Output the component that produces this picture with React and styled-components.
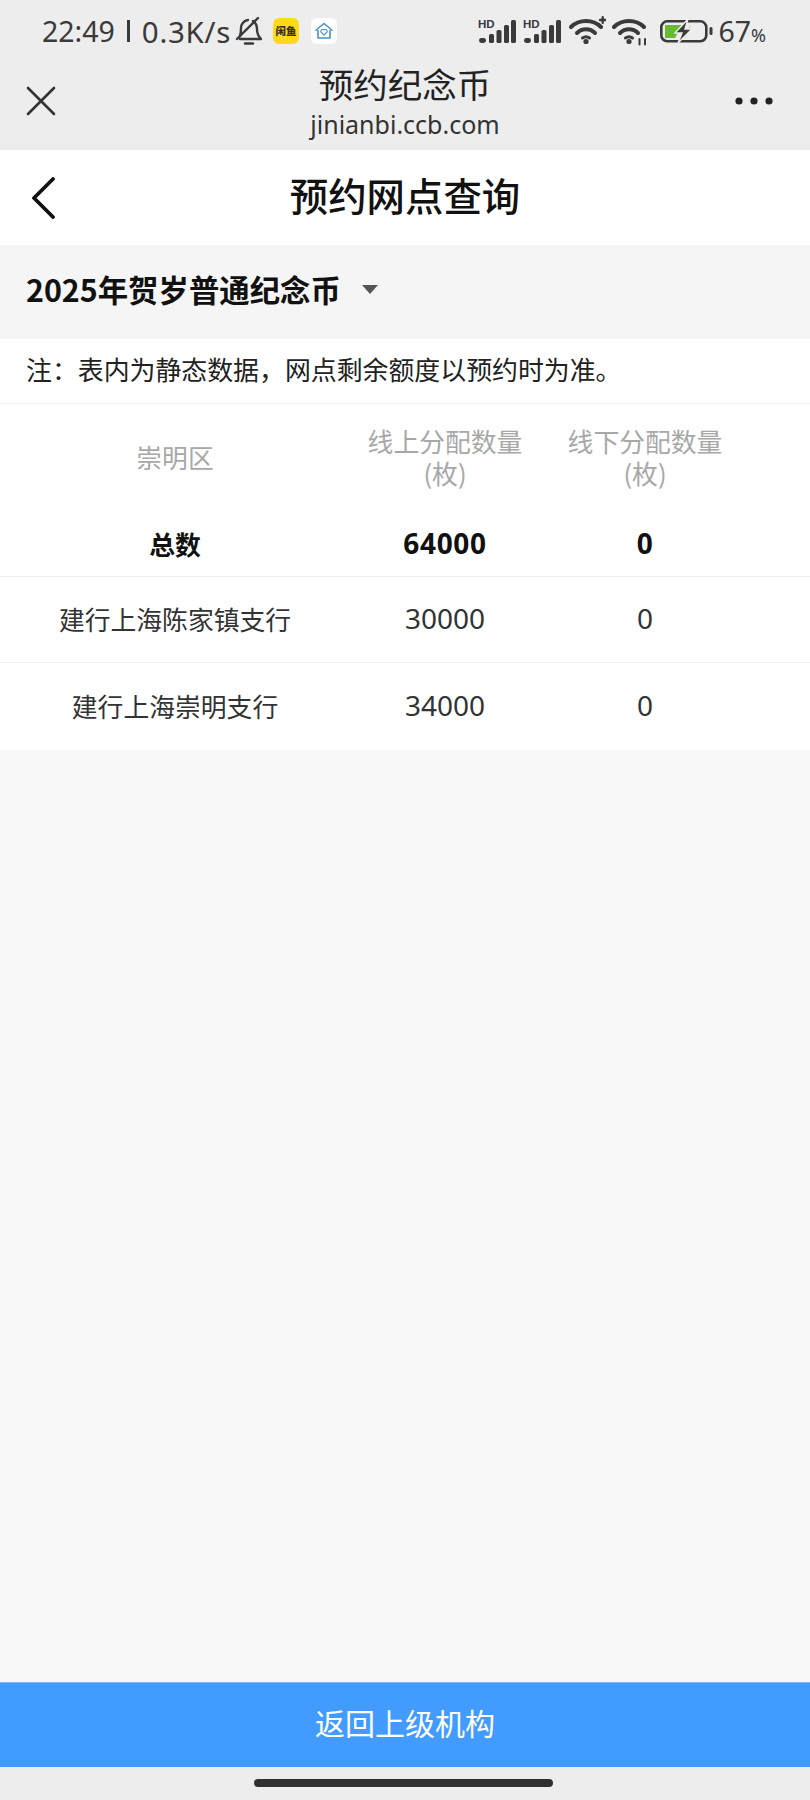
import styled, { createGlobalStyle } from "styled-components";

const GlobalStyle = createGlobalStyle`
  html, body {
    margin: 0;
    padding: 0;
    background: #f8f8f8;
    font-family: "Noto Sans CJK SC", "Noto Sans", sans-serif;
  }
  * { box-sizing: border-box; }
`;

const Page = styled.div`
  width: 810px;
  height: 1800px;
  display: flex;
  flex-direction: column;
  background: #f8f8f8;
  overflow: hidden;
`;

const TopArea = styled.div`
  height: 150px;
  background: #ededed;
  display: flex;
  flex-direction: column;
`;

const StatusBar = styled.div`
  height: 62px;
  padding: 0 44px 0 42px;
  display: flex;
  align-items: center;
  justify-content: space-between;
  color: #3a3a3a;
`;

const StatusGroup = styled.div`
  display: flex;
  align-items: center;
`;

const StatusText = styled.span`
  font-family: "Noto Sans", sans-serif;
  font-size: ${(p) => p.$size || 28.5}px;
  letter-spacing: ${(p) => p.$spacing || 0}px;
  white-space: nowrap;
`;

const Divider = styled.div`
  width: 3px;
  height: 22px;
  margin: 0 12px;
  background: #3a3a3a;
`;

const Percent = styled.span`
  font-size: 18px;
`;

const IconSlot = styled.div`
  display: flex;
  margin-left: ${(p) => p.$ml || 0}px;
`;

const AppBadge = styled.div`
  width: 26px;
  height: 26px;
  margin-left: ${(p) => p.$ml}px;
  border-radius: 6px;
  background: ${(p) => p.$bg};
  display: flex;
  align-items: center;
  justify-content: center;
`;

const BadgeText = styled.span`
  font-size: 10.5px;
  line-height: 1;
  font-weight: 900;
  color: #3a2f10;
  white-space: nowrap;
`;

const BrowserBar = styled.div`
  flex: 1;
  display: grid;
  grid-template-columns: 1fr auto 1fr;
  align-items: center;
  padding: 0 26px 10px;
`;

const BrowserTitle = styled.div`
  display: flex;
  flex-direction: column;
  align-items: center;
  gap: 4px;
`;

const SiteName = styled.div`
  font-size: 34.5px;
  line-height: 42px;
  color: #222;
`;

const SiteUrl = styled.div`
  font-family: "Noto Sans", sans-serif;
  font-size: 25px;
  line-height: 32px;
  color: #333;
`;

const MoreSlot = styled.div`
  display: flex;
  justify-content: flex-end;
  padding-right: 11px;
`;

const NavBar = styled.div`
  height: 95px;
  padding-left: 31px;
  background: #fff;
  display: grid;
  grid-template-columns: 1fr auto 1fr;
  align-items: center;
`;

const BackButton = styled.div`
  display: flex;
`;

const NavTitle = styled.div`
  padding-bottom: 7px;
  margin-left: -31px;
  font-size: 38.4px;
  font-weight: 500;
  color: #111;
`;

const Selector = styled.div`
  height: 94px;
  padding: 0 26px 6px;
  display: flex;
  align-items: center;
  gap: 21px;
  background: #f5f5f5;
`;

const SelectorLabel = styled.div`
  font-size: 30.4px;
  font-weight: 700;
  color: #111;
`;

const Caret = styled.div`
  width: 0;
  height: 0;
  border-left: 8px solid transparent;
  border-right: 8px solid transparent;
  border-top: 9px solid #555;
`;

const Note = styled.div`
  height: 65px;
  padding: 0 26px 6px;
  display: flex;
  align-items: center;
  background: #fff;
  border-bottom: 1px solid #f0f0f0;
  font-size: 25.9px;
  color: #222;
  white-space: nowrap;
`;

const Table = styled.div`
  background: #fff;
`;

const Row = styled.div`
  display: grid;
  grid-template-columns: 350px 190px 210px;
  align-items: center;
  height: ${(p) => p.$h}px;
  border-bottom: ${(p) => (p.$line ? "1px solid #f0f0f0" : "none")};
`;

const Cell = styled.div`
  padding-top: ${(p) => (p.$muted ? 1 : p.$bold ? 2 : 0)}px;
  padding-bottom: ${(p) => (p.$muted || p.$bold ? 0 : 2)}px;
  text-align: center;
  font-size: 25.8px;
  line-height: ${(p) => (p.$muted ? 32 : 37)}px;
  color: ${(p) => (p.$muted ? "#a8a8a8" : p.$bold ? "#111" : "#333")};
  font-weight: ${(p) => (p.$bold ? 700 : 400)};
  white-space: nowrap;
`;

const NumberCell = styled(Cell)`
  font-family: "Noto Sans", sans-serif;
  font-size: 28px;
  letter-spacing: ${(p) => (p.$bold ? 0.7 : 0)}px;
`;

const Spacer = styled.div`
  flex: 1;
`;

const ReturnButton = styled.div`
  height: 85px;
  padding-bottom: 6px;
  background: #429bff;
  border-top: 1px solid #7ab8f5;
  color: #fff;
  font-size: 30px;
  display: flex;
  align-items: center;
  justify-content: center;
`;

const BottomBar = styled.div`
  height: 33px;
  padding: 12px 3px 0 0;
  background: #ededed;
  display: flex;
  justify-content: center;
`;

const HomeIndicator = styled.div`
  width: 299px;
  height: 8px;
  border-radius: 4px;
  background: #303030;
`;

const Signal = () => (
  <svg width="38" height="30" viewBox="0 0 38 30" fill="#3a3a3a">
    <text x="0" y="12" fontSize="11.5" fontWeight="700" fontFamily="Liberation Sans, sans-serif">HD</text>
    <rect x="1" y="22" width="7" height="5" rx="2.4" />
    <rect x="11" y="18" width="5" height="9" rx="1.6" />
    <rect x="18.5" y="14" width="5" height="13" rx="1.6" />
    <rect x="26" y="9" width="5" height="18" rx="1.6" />
    <rect x="33" y="4" width="5" height="23" rx="1.6" />
  </svg>
);

const Wifi = ({ plus }) => (
  <svg width="37" height="30" viewBox="0 0 37 30" fill="none" stroke="#3a3a3a" strokeLinecap="round">
    <path d="M2 11 C10 3 24 3 32 11" strokeWidth="4" />
    <path d="M8 17 C13 12 21 12 26 17" strokeWidth="4" />
    <path d="M13.5 22 C15.5 20.5 18.5 20.5 20.5 22" strokeWidth="3" />
    <circle cx="17" cy="25.5" r="2.6" fill="#3a3a3a" stroke="none" />
    {plus ? (
      <path d="M31 4 H36.5 M33.7 1.2 V6.8" strokeWidth="2.4" />
    ) : (
      <path d="M27.5 23 V28.5 M33 23 V28.5" strokeWidth="2" />
    )}
  </svg>
);

const Battery = () => (
  <svg width="53" height="30" viewBox="0 0 53 30">
    <rect x="1.3" y="5.3" width="45" height="20" rx="6" fill="none" stroke="#3a3a3a" strokeWidth="2.6" />
    <path d="M5 9 H22 L15 22 H5 Z" fill="#66bb33" />
    <path d="M22 22 L30 9 H32 L26 22 Z" fill="#cfe8bd" />
    <path d="M28 3 L15 17 H22 L18 27 L32 13 H25 Z" fill="#3a3a3a" stroke="#ededed" strokeWidth="1.4" />
    <rect x="49.5" y="11" width="3" height="8" rx="1.5" fill="#3a3a3a" />
  </svg>
);

const MutedBell = () => (
  <svg width="28" height="30" viewBox="0 0 28 30" fill="none" stroke="#3a3a3a" strokeWidth="2.4" strokeLinecap="round" strokeLinejoin="round">
    <path d="M5 20 C6 17 6 15 6 12 C6 8 9 4.5 13 4 M18 5 C21 7 22 9 22 13 C22 18 23 20 26 23 H5" />
    <path d="M10 27.5 H18" />
    <path d="M2 23 L23 2" />
  </svg>
);

const HomeGlyph = () => (
  <svg width="20" height="20" viewBox="0 0 20 20" fill="none" stroke="#4a90c8" strokeWidth="1.6" strokeLinejoin="round">
    <path d="M1.5 9.5 L10 2.5 L18.5 9.5" />
    <path d="M4 9 V17 H16 V9" />
    <path d="M10 14 L6.8 10.8 A2 2 0 0 1 10 8.8 A2 2 0 0 1 13.2 10.8 Z" stroke="#5b93b8" strokeWidth="1.2" />
  </svg>
);

const CloseIcon = () => (
  <svg width="30" height="30" viewBox="0 0 30 30" stroke="#333" strokeWidth="2.6" strokeLinecap="round">
    <path d="M2 2 L28 28 M28 2 L2 28" />
  </svg>
);

const MoreIcon = () => (
  <svg width="38" height="10" viewBox="0 0 38 10" fill="#222">
    <circle cx="4" cy="5" r="3.6" />
    <circle cx="19" cy="5" r="3.6" />
    <circle cx="34" cy="5" r="3.6" />
  </svg>
);

const BackIcon = () => (
  <svg width="26" height="42" viewBox="0 0 26 42" fill="none" stroke="#111" strokeWidth="3.8" strokeLinecap="round" strokeLinejoin="round">
    <path d="M22 2 L3 21 L22 40" />
  </svg>
);

const rows = [
  { name: "建行上海陈家镇支行", online: "30000", offline: "0" },
  { name: "建行上海崇明支行", online: "34000", offline: "0" },
];

export default function App() {
  return (
    <Page>
      <GlobalStyle />
      <TopArea>
        <StatusBar>
          <StatusGroup>
            <StatusText>22:49</StatusText>
            <Divider />
            <StatusText $size={29.5} $spacing={0.7}>0.3K/s</StatusText>
            <IconSlot $ml={4}>
              <MutedBell />
            </IconSlot>
            <AppBadge $bg="#ffd91a" $ml={10}>
              <BadgeText>闲鱼</BadgeText>
            </AppBadge>
            <AppBadge $bg="#fff" $ml={12}>
              <HomeGlyph />
            </AppBadge>
          </StatusGroup>
          <StatusGroup>
            <Signal />
            <IconSlot $ml={7}>
              <Signal />
            </IconSlot>
            <IconSlot $ml={8}>
              <Wifi plus />
            </IconSlot>
            <IconSlot $ml={6}>
              <Wifi />
            </IconSlot>
            <IconSlot $ml={11}>
              <Battery />
            </IconSlot>
            <IconSlot $ml={5}>
              <StatusText>
                67<Percent>%</Percent>
              </StatusText>
            </IconSlot>
          </StatusGroup>
        </StatusBar>
        <BrowserBar>
          <CloseIcon />
          <BrowserTitle>
            <SiteName>预约纪念币</SiteName>
            <SiteUrl>jinianbi.ccb.com</SiteUrl>
          </BrowserTitle>
          <MoreSlot>
            <MoreIcon />
          </MoreSlot>
        </BrowserBar>
      </TopArea>
      <NavBar>
        <BackButton>
          <BackIcon />
        </BackButton>
        <NavTitle>预约网点查询</NavTitle>
      </NavBar>
      <Selector>
        <SelectorLabel>2025年贺岁普通纪念币</SelectorLabel>
        <Caret />
      </Selector>
      <Note>注：表内为静态数据，网点剩余额度以预约时为准。</Note>
      <Table>
        <Row $h={104}>
          <Cell $muted>崇明区</Cell>
          <Cell $muted>
            线上分配数量
            <br />
            (枚)
          </Cell>
          <Cell $muted>
            线下分配数量
            <br />
            (枚)
          </Cell>
        </Row>
        <Row $h={69} $line>
          <Cell $bold>总数</Cell>
          <NumberCell $bold>64000</NumberCell>
          <NumberCell $bold>0</NumberCell>
        </Row>
        {rows.map((row, i) => (
          <Row key={row.name} $h={i === 0 ? 86 : 87} $line={i === 0}>
            <Cell>{row.name}</Cell>
            <NumberCell>{row.online}</NumberCell>
            <NumberCell>{row.offline}</NumberCell>
          </Row>
        ))}
      </Table>
      <Spacer />
      <ReturnButton>返回上级机构</ReturnButton>
      <BottomBar>
        <HomeIndicator />
      </BottomBar>
    </Page>
  );
}
